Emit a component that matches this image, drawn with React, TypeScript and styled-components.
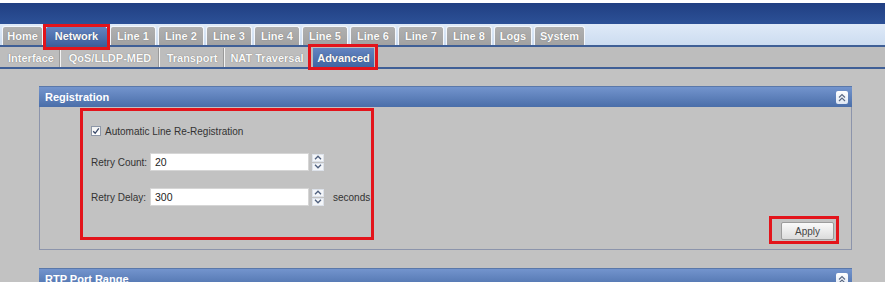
import styled, { createGlobalStyle, css } from "styled-components";

const GlobalStyle = createGlobalStyle`
  html, body {
    margin: 0;
    padding: 0;
    background: #fff;
    overflow: hidden;
  }
  body {
    font-family: "Liberation Sans", Arial, sans-serif;
  }
`;

const RED = "#e3141b";

const Page = styled.div`
  width: 885px;
  height: 282px;
  padding-top: 3px;
  box-sizing: border-box;
  display: flex;
  flex-direction: column;
  overflow: hidden;
`;

const Banner = styled.div`
  height: 21px;
  flex-shrink: 0;
  background: linear-gradient(#213f82, #2c5197);
`;

const TabBar = styled.div`
  height: 23px;
  flex-shrink: 0;
  box-sizing: border-box;
  padding-left: 2px;
  display: flex;
  align-items: flex-end;
  gap: 2px;
  background: linear-gradient(#dfeaf8, #ccdcf0);
  border-bottom: 2px solid #3f5f96;
`;

const highlight = css<{ $hl?: [number, number, number, number] }>`
  ${({ $hl }) =>
    $hl &&
    css`
      &::after {
        content: "";
        position: absolute;
        top: ${$hl[0]}px;
        right: ${$hl[1]}px;
        bottom: ${$hl[2]}px;
        left: ${$hl[3]}px;
        border: 3px solid ${RED};
        z-index: 5;
      }
    `}
`;

const Tab = styled.div<{ $w: number; $active?: boolean; $hl?: [number, number, number, number] }>`
  position: relative;
  width: ${({ $w }) => $w}px;
  height: 19px;
  box-sizing: border-box;
  display: flex;
  align-items: center;
  justify-content: center;
  border: 1px solid #f4f7fb;
  border-bottom: none;
  border-radius: 3px 3px 0 0;
  background: ${({ $active }) =>
    $active ? "linear-gradient(#6384c0, #3e619f)" : "linear-gradient(#b0b0b0, #a2a2a2)"};
  color: #fbfbfb;
  font-size: 11px;
  font-weight: bold;
  text-shadow: 0 0 1px rgba(60, 60, 60, 0.6);
  ${highlight}
`;

const SubBar = styled.div`
  height: 22px;
  flex-shrink: 0;
  box-sizing: border-box;
  padding: 1px 0 0 2px;
  display: flex;
  align-items: stretch;
  background: #bdbdbd;
  border-bottom: 2px solid #3f5f96;
`;

const SubTab = styled.div<{ $w: number; $active?: boolean; $hl?: [number, number, number, number] }>`
  position: relative;
  width: ${({ $w }) => $w}px;
  box-sizing: border-box;
  display: flex;
  align-items: center;
  justify-content: center;
  font-size: 11px;
  font-weight: bold;
  color: #fafafa;
  text-shadow: 0 0 1px rgba(60, 60, 60, 0.7);
  ${({ $active }) =>
    $active
      ? css`
          margin-left: 3px;
          background: linear-gradient(#6384c0, #4165a3);
        `
      : css`
          border-right: 1px solid #f3f3f3;
          box-shadow: inset -1px 0 0 #9a9a9a;
        `}
  ${highlight}
`;

const Content = styled.div`
  flex: 1;
  min-height: 0;
  background: #c2c2c2;
  padding: 17px 0 0 39px;
  display: flex;
  flex-direction: column;
  gap: 18px;
`;

const Panel = styled.div`
  width: 813px;
  box-sizing: border-box;
  border: 1px solid #8c94ab;
  border-top: none;
  flex-shrink: 0;
`;

const PanelHeader = styled.div`
  height: 21px;
  box-sizing: border-box;
  margin: 0 -1px;
  padding: 0 4px 0 6px;
  display: flex;
  align-items: center;
  justify-content: space-between;
  background: linear-gradient(#7394cd, #4a6ea9);
  border-top: 1px solid #5a78aa;
  color: #fff;
  font-size: 11px;
  font-weight: bold;
`;

const CollapseBtn = styled.div`
  width: 12px;
  height: 13px;
  border-radius: 2px;
  background: linear-gradient(#ffffff, #dfe7f4);
  display: flex;
  align-items: center;
  justify-content: center;
`;

const PanelBody = styled.div<{ $h?: number }>`
  padding: 1px 12px 5px 40px;
  display: flex;
  justify-content: space-between;
  align-items: flex-end;
  ${({ $h }) => $h !== undefined && `height: ${$h}px;`}
`;

const FormFrame = styled.div`
  width: 294px;
  height: 132px;
  box-sizing: border-box;
  border: 3px solid ${RED};
  margin-bottom: 4px;
  padding: 11px 0 0 8px;
  display: flex;
  flex-direction: column;
`;

const Row = styled.div<{ $mt?: number }>`
  height: 18px;
  margin-top: ${({ $mt }) => $mt ?? 0}px;
  display: flex;
  align-items: center;
  font-size: 10px;
  color: #333;
`;

const CheckBox = styled.span`
  width: 10px;
  height: 10px;
  box-sizing: border-box;
  border: 1px solid #8d97a8;
  background: linear-gradient(#f2f2f2, #fff);
  margin-right: 4px;
  display: flex;
  align-items: center;
  justify-content: center;
`;

const Label = styled.span`
  width: 59px;
  white-space: nowrap;
`;

const TextInput = styled.div`
  width: 159px;
  height: 18px;
  box-sizing: border-box;
  border: 1px solid #d6d6d6;
  background: #fff;
  padding-left: 4px;
  display: flex;
  align-items: center;
  font-size: 10.5px;
  color: #222;
`;

const Spinner = styled.div`
  width: 12px;
  height: 17px;
  margin-left: 3px;
  display: flex;
  flex-direction: column;
  gap: 1px;
`;

const SpinHalf = styled.div`
  flex: 1;
  background: #f4f6f9;
  border: 1px solid #dde2ea;
  display: flex;
  align-items: center;
  justify-content: center;
`;

const Unit = styled.span`
  margin-left: 9px;
`;

const ApplyFrame = styled.div`
  border: 3px solid ${RED};
  padding: 3px 2px 1px 9px;
`;

const ApplyButton = styled.div`
  width: 53px;
  height: 18px;
  box-sizing: border-box;
  border: 1px solid #9c9c9c;
  border-radius: 2px;
  background: linear-gradient(#fafafa, #dcdcdc);
  display: flex;
  align-items: center;
  justify-content: center;
  font-size: 10px;
  color: #444;
`;

const Chevron = ({ up }: { up?: boolean }) => (
  <svg width="8" height="5" viewBox="0 0 8 5">
    <path
      d={up ? "M1 4.2 L4 1.2 L7 4.2" : "M1 0.8 L4 3.8 L7 0.8"}
      fill="none"
      stroke="#4f607e"
      strokeWidth="1.3"
    />
  </svg>
);

const DoubleUp = () => (
  <svg width="8" height="9" viewBox="0 0 8 9">
    <path d="M1 4.5 L4 1.5 L7 4.5 M1 8 L4 5 L7 8" fill="none" stroke="#5c6a84" strokeWidth="1.2" />
  </svg>
);

const tabs: { label: string; w: number }[] = [
  { label: "Home", w: 41 },
  { label: "Network", w: 63 },
  { label: "Line 1", w: 46 },
  { label: "Line 2", w: 46 },
  { label: "Line 3", w: 46 },
  { label: "Line 4", w: 46 },
  { label: "Line 5", w: 46 },
  { label: "Line 6", w: 46 },
  { label: "Line 7", w: 46 },
  { label: "Line 8", w: 46 },
  { label: "Logs", w: 38 },
  { label: "System", w: 51 },
];

const subTabs: { label: string; w: number }[] = [
  { label: "Interface", w: 59 },
  { label: "QoS/LLDP-MED", w: 99 },
  { label: "Transport", w: 65 },
  { label: "NAT Traversal", w: 85 },
];

export default function App() {
  return (
    <>
      <GlobalStyle />
      <Page>
        <Banner />
        <TabBar>
          {tabs.map((t) => (
            <Tab
              key={t.label}
              $w={t.w}
              $active={t.label === "Network"}
              $hl={t.label === "Network" ? [-3, -3, -5, -3] : undefined}
            >
              {t.label}
            </Tab>
          ))}
        </TabBar>
        <SubBar>
          {subTabs.map((t) => (
            <SubTab key={t.label} $w={t.w}>
              {t.label}
            </SubTab>
          ))}
          <SubTab $w={61} $active $hl={[-4, -4, -3, -5]}>
            Advanced
          </SubTab>
        </SubBar>
        <Content>
          <Panel>
            <PanelHeader>
              <span>Registration</span>
              <CollapseBtn>
                <DoubleUp />
              </CollapseBtn>
            </PanelHeader>
            <PanelBody>
              <FormFrame>
                <Row>
                  <CheckBox>
                    <svg width="8" height="8" viewBox="0 0 8 8">
                      <path d="M1.2 4.2 L3.2 6.3 L6.8 1.3" fill="none" stroke="#3a4a6a" strokeWidth="1.3" />
                    </svg>
                  </CheckBox>
                  Automatic Line Re-Registration
                </Row>
                <Row $mt={13}>
                  <Label>Retry Count:</Label>
                  <TextInput>20</TextInput>
                  <Spinner>
                    <SpinHalf>
                      <Chevron up />
                    </SpinHalf>
                    <SpinHalf>
                      <Chevron />
                    </SpinHalf>
                  </Spinner>
                </Row>
                <Row $mt={17}>
                  <Label>Retry Delay:</Label>
                  <TextInput>300</TextInput>
                  <Spinner>
                    <SpinHalf>
                      <Chevron up />
                    </SpinHalf>
                    <SpinHalf>
                      <Chevron />
                    </SpinHalf>
                  </Spinner>
                  <Unit>seconds</Unit>
                </Row>
              </FormFrame>
              <ApplyFrame>
                <ApplyButton>Apply</ApplyButton>
              </ApplyFrame>
            </PanelBody>
          </Panel>
          <Panel>
            <PanelHeader>
              <span>RTP Port Range</span>
              <CollapseBtn>
                <DoubleUp />
              </CollapseBtn>
            </PanelHeader>
            <PanelBody $h={40} />
          </Panel>
        </Content>
      </Page>
    </>
  );
}
